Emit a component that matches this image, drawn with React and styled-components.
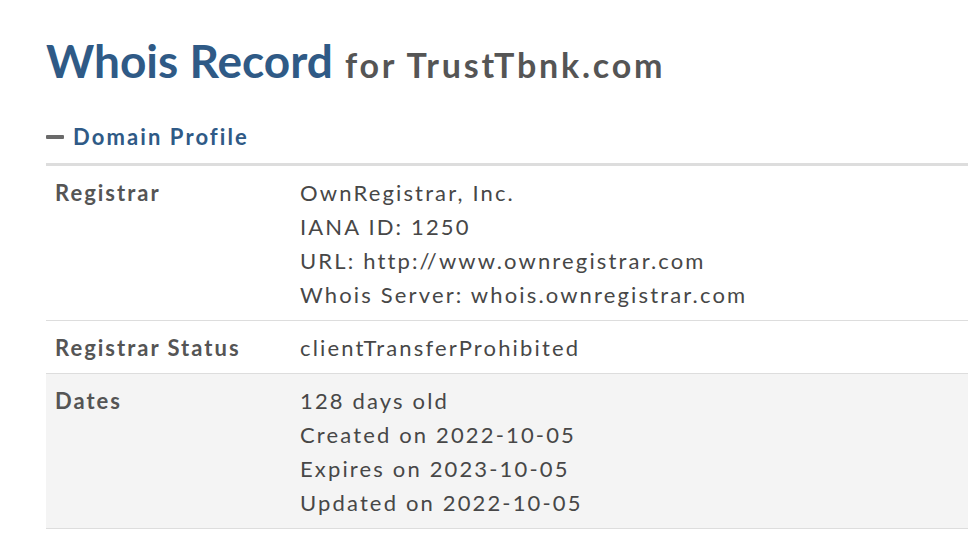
import React from 'react'
import styled, { createGlobalStyle } from 'styled-components'

const Global = createGlobalStyle`
  body {
    margin: 0;
    background: #fff;
    font-family: Lato, "Open Sans", sans-serif;
  }
`

const Page = styled.div`
  padding: 33px 0 0 46px;
`

const Title = styled.h1`
  margin: 0;
  font-size: 46px;
  font-weight: 700;
  color: #2f5a86;
  line-height: 56px;
`

const Sub = styled.span`
  font-size: 34px;
  color: #555;
  letter-spacing: 2.8px;
  margin-left: 12px;
`

const SectionHead = styled.div`
  display: flex;
  align-items: center;
  gap: 9px;
  margin-top: 30px;
  padding-bottom: 13px;
  border-bottom: 3px solid #ddd;
  font-size: 22px;
  font-weight: 700;
  letter-spacing: 2.1px;
  color: #2f5a86;
`

const Minus = styled.span`
  width: 18px;
  height: 4px;
  border-radius: 1px;
  background: #6a6a6a;
`

const Row = styled.div`
  display: grid;
  grid-template-columns: 245px 1fr;
  padding: 10px 0 8px 9px;
  border-bottom: 1px solid #ddd;
  background: ${p => (p.$shade ? '#f4f4f4' : '#fff')};
  font-size: 22px;
  line-height: 34px;
  letter-spacing: 2px;
`

const Label = styled.div`
  font-weight: 700;
  color: #555;
`

const Values = styled.div`
  color: #474747;
  letter-spacing: 2.15px;
`

const rows = [
  {
    label: 'Registrar',
    values: [
      'OwnRegistrar, Inc.',
      'IANA ID: 1250',
      'URL: http://www.ownregistrar.com',
      'Whois Server: whois.ownregistrar.com',
    ],
  },
  { label: 'Registrar Status', values: ['clientTransferProhibited'] },
  {
    label: 'Dates',
    shade: true,
    values: [
      '128 days old',
      'Created on 2022-10-05',
      'Expires on 2023-10-05',
      'Updated on 2022-10-05',
    ],
  },
]

export default function App() {
  return (
    <Page>
      <Global />
      <Title>
        Whois Record<Sub>for TrustTbnk.com</Sub>
      </Title>
      <SectionHead>
        <Minus />
        Domain Profile
      </SectionHead>
      {rows.map(r => (
        <Row key={r.label} $shade={r.shade}>
          <Label>{r.label}</Label>
          <Values>
            {r.values.map(v => (
              <div key={v}>{v}</div>
            ))}
          </Values>
        </Row>
      ))}
    </Page>
  )
}
